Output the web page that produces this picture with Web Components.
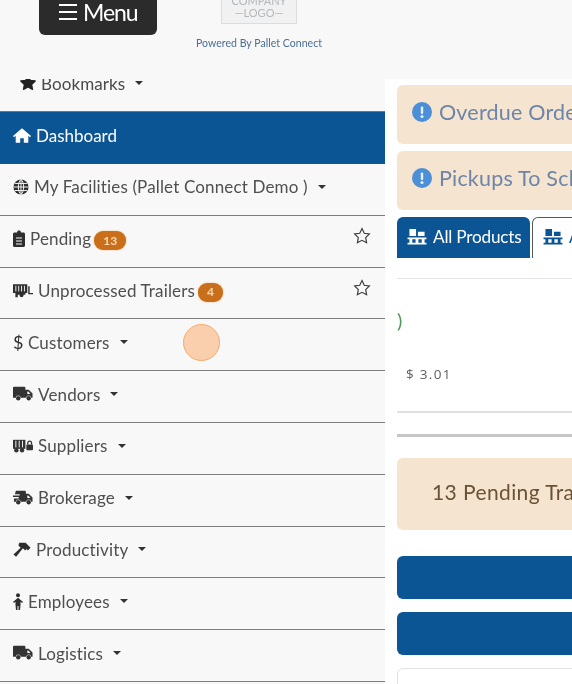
<!DOCTYPE html>
<html>
<head>
<meta charset="utf-8">
<style>
  html, body { margin: 0; height: 100%; overflow: hidden; background: #f8f8f8; }
  body { font-family: Lato, "Open Sans", sans-serif; color: #444; filter: blur(.45px); }
</style>
</head>
<body>
<app-page>
  <top-bar slot="top"></top-bar>
  <side-nav slot="side">
    <nav-item icon="house" active>Dashboard</nav-item>
    <nav-item icon="globe" caret>My Facilities (Pallet Connect Demo )</nav-item>
    <nav-item icon="clipboard" badge="13" star>Pending</nav-item>
    <nav-item icon="trailer" badge="4" star>Unprocessed Trailers</nav-item>
    <nav-item icon="dollar" caret>Customers</nav-item>
    <nav-item icon="truck" caret>Vendors</nav-item>
    <nav-item icon="supplier" caret>Suppliers</nav-item>
    <nav-item icon="broker" caret>Brokerage</nav-item>
    <nav-item icon="hammer" caret>Productivity</nav-item>
    <nav-item icon="person" caret>Employees</nav-item>
    <nav-item icon="truck" caret>Logistics</nav-item>
  </side-nav>
  <main-panel slot="main"></main-panel>
</app-page>
<click-dot></click-dot>

<script>
const ICONS = {
  star: `<svg viewBox="0 0 20 20" width="18" height="18"><path fill="#222" stroke="#222" stroke-width="1.500" stroke-linejoin="round" d="M10 2l2.500 5 5.500.8-4 3.900 1 5.300-5-2.600L5 17l1-5.300-4-3.900 5.500-.8z"/></svg>`,
  house: `<svg viewBox="0 0 20 18" width="18" height="17"><path fill="#fff" d="M10 1L0 9.600l1.200 1.300L3 9.400V17h5v-5h4v5h5V9.400l1.800 1.500L20 9.600z"/></svg>`,
  globe: `<svg viewBox="0 0 18 18" width="16" height="16"><circle cx="9" cy="9" r="8.500" fill="#2e2e2e"/><path fill="none" stroke="#f8f8f8" stroke-width="1.100" d="M9 .5v17M.5 9h17M2 5h14M2 13h14M9 .5C5 4 5 14 9 17.500M9 .5c4 3.500 4 13.500 0 17"/></svg>`,
  clipboard: `<svg viewBox="0 0 12 17" width="12" height="17"><path fill="#2e2e2e" d="M1.500 2.500H4C4 1 5 .4 6 .4S8 1 8 2.500h2.500c.8 0 1.500.7 1.500 1.500v11.500c0 .8-.7 1.500-1.500 1.500h-9C.7 17 0 16.300 0 15.500V4c0-.8.7-1.500 1.500-1.500z"/><path stroke="#f8f8f8" stroke-width="1" d="M3 8h6M3 11h6M3 14h6"/></svg>`,
  trailer: `<svg viewBox="0 0 21 15" width="20" height="15"><path fill="#2e2e2e" d="M0 1h15v9h-2v2H5v2.500H2.500V10H0z"/><path stroke="#f8f8f8" stroke-width="1" d="M3 2.500v6M6 2.500v6M9 2.500v6M12 2.500v6"/><path fill="#2e2e2e" d="M16 3h1.500v7H21v1.500h-5z"/><circle cx="9" cy="12.500" r="2" fill="#2e2e2e"/></svg>`,
  truck: `<svg viewBox="0 0 21 15" width="20" height="16"><path fill="#333" d="M1 0h11c.6 0 1 .4 1 1v2h3.500L20.500 7v4.500H19a2.500 2.500 0 0 0-5 0H8a2.500 2.500 0 0 0-5 0H0V1c0-.6.4-1 1-1z"/><circle cx="5.500" cy="12" r="2.300" fill="#333"/><circle cx="16.500" cy="12" r="2.300" fill="#333"/><path fill="#f8f8f8" d="M15 5h1l2 2v.6h-3z"/></svg>`,
  supplier: `<svg viewBox="0 0 21 15" width="20" height="16"><path fill="#333" d="M0 1h13v9.500H0z"/><path stroke="#f8f8f8" stroke-width="1" d="M3 2v7M6.500 2v7M10 2v7"/><circle cx="3.500" cy="12" r="2.300" fill="#333"/><circle cx="9.500" cy="12" r="2.300" fill="#333"/><rect x="14" y="6" width="7" height="6" rx="1" fill="#333"/><path fill="none" stroke="#333" stroke-width="1.300" d="M15.500 6V4.500a2 2 0 0 1 4 0V6"/></svg>`,
  broker: `<svg viewBox="0 0 21 15" width="20" height="16"><path fill="#333" d="M3 0h9.500c.6 0 1 .4 1 1v2h3L20.500 7v4.500H19a2.500 2.500 0 0 0-5 0H8a2.500 2.500 0 0 0-5 0H1V8h5V6.500H0V5h7V3.500H2z"/><circle cx="5.500" cy="12" r="2.300" fill="#333"/><circle cx="16.500" cy="12" r="2.300" fill="#333"/><path fill="#f8f8f8" d="M15 5h1l2 2v.6h-3z"/></svg>`,
  hammer: `<svg viewBox="0 0 20 18" width="18" height="17"><path fill="#2e2e2e" d="M7 1.500h7l5.500 5.500-3 3-1.500-1.500-1.500 1.500-2.500-2.500L3.500 17 .5 14.500l8-7.500-2.500-2.500z"/></svg>`,
  person: `<svg viewBox="0 0 10 17" width="10" height="17"><circle cx="5" cy="2.200" r="2" fill="#2e2e2e"/><path fill="#2e2e2e" d="M5 4.800l5 4.200-1 1-1.500-1.200v3.200L7 17H5.500v-4h-1v4H3l-.5-5V8.800L1 10 0 9z"/></svg>`,
  pallet: c => `<svg viewBox="0 0 20 18" width="20" height="17"><path fill="${c}" d="M2 1h7v7.500H2zM11 4h7v4.500h-7zM0 10h20v2H0zM0 15.500h20v2H0zM2 12h3v3.500H2zM8.500 12h3v3.500h-3zM15 12h3v3.500h-3z"/></svg>`,
  info: `<svg viewBox="0 0 20 20" width="20" height="20"><circle cx="10" cy="10" r="10" fill="#4a8fd8"/><rect x="8.800" y="4.500" width="2.400" height="7.500" rx="1" fill="#eef0ee"/><circle cx="10" cy="14.500" r="1.500" fill="#eef0ee"/></svg>`,
  hollowStar: `<svg viewBox="0 0 20 20" width="18" height="18"><path fill="none" stroke="#3a3a3a" stroke-width="1.300" d="M10 1.800l2.500 5.200 5.700.8-4.100 4 1 5.700L10 14.800l-5.100 2.700 1-5.700-4.100-4 5.700-.8z"/></svg>`
};

class AppPage extends HTMLElement {
  constructor() {
    super();
    this.attachShadow({ mode: "open" });
    this.shadowRoot.innerHTML = `
    <style>
      :host { display: grid; grid-template-columns: 385px 187px; grid-template-rows: 79px 605px; width: 572px; height: 684px; overflow: hidden; background: #f8f8f8; }
      .top { grid-column: 1 / 3; }
      .side { overflow: hidden; }
      .main { background: #fff; overflow: hidden; min-width: 0; }
    </style>
    <div class="top"><slot name="top"></slot></div>
    <div class="side"><slot name="side"></slot></div>
    <div class="main"><slot name="main"></slot></div>
    `;
  }
}

class TopBar extends HTMLElement {
  constructor() {
    super();
    this.attachShadow({ mode: "open" });
    this.shadowRoot.innerHTML = `
    <style>
      :host { display: flex; height: 79px; background: #f8f8f8; overflow: hidden; padding-left: 39px; box-sizing: border-box; }
      .menu { display: flex; align-items: center; gap: 6px; width: 118px; height: 35px; background: #2b2b2b; border-radius: 0 0 6px 6px; color: #fff; font-size: 23px; padding: 0 0 11px 20px; box-sizing: border-box; letter-spacing: -1.100px; }
      .bars { width: 18px; height: 16px; border-top: 2px solid #fff; border-bottom: 2px solid #fff; position: relative; box-sizing: border-box; }
      .bars::after { content: ""; position: absolute; left: 0; right: 0; top: 5px; height: 2px; background: #fff; }
      .brand { margin-left: 38px; width: 128px; display: flex; flex-direction: column; align-items: center; }
      .logo { width: 76px; height: 24px; background: #f1f1f1; border: 1px solid #dcdcdc; border-top: 0; box-sizing: border-box; color: #b4b8bc; font-size: 11px; line-height: 12px; text-align: center; margin-bottom: 13px; overflow: hidden; display: flex; flex-direction: column; justify-content: flex-end; padding-bottom: 4px; flex: none; }
      .power { color: #4a6d96; font-size: 10.500px; white-space: nowrap; letter-spacing: .04px; }
    </style>
    <div class="menu"><span class="bars"></span><span>Menu</span></div>
    <div class="brand">
      <div class="logo"><span>COMPANY</span><span>&mdash;LOGO&mdash;</span></div>
      <div class="power">Powered By Pallet Connect</div>
    </div>
    `;
  }
}

class SideNav extends HTMLElement {
  constructor() {
    super();
    this.attachShadow({ mode: "open" });
    this.shadowRoot.innerHTML = `
    <style>
      :host { display: block; background: #f8f8f8; }
      .marks { display: flex; align-items: center; height: 32px; padding: 0 0 24px 19px; box-sizing: border-box; gap: 4px; font-size: 17px; letter-spacing: .1px; color: #4a4a4a; overflow: hidden; }
      .marks i { margin-left: 6px; border: 4.500px solid transparent; border-top-color: #333; border-bottom: 0; }
      svg { flex: none; }
    </style>
    <div class="marks">${ICONS.star}<span>Bookmarks</span><i></i></div>
    <slot></slot>
    `;
  }
}

class NavItem extends HTMLElement {
  constructor() {
    super();
    this.attachShadow({ mode: "open" });
    const name = this.getAttribute("icon");
    const badge = this.getAttribute("badge");
    const icon = name === "dollar" ? `<span class="dollar">$</span>` : ICONS[name];
    this.shadowRoot.innerHTML = `
    <style>
      :host { display: flex; align-items: center; gap: 5px; height: 51.800px; box-sizing: border-box; padding: 0 14px 5px 13px; border-bottom: 1.500px solid #7d7d7d; font-size: 17px; letter-spacing: .15px; color: #4f4f4f; white-space: nowrap; }
      :host([active]) { height: 53px; background: #0b5595; color: #fff; border: 0; border-top: 1px solid #4f7ea8; padding-bottom: 6px; letter-spacing: 0; }
      svg { flex: none; }
      .dollar { font-size: 18px; color: #2e2e2e; width: 10px; }
      .caret { margin-left: 5px; border: 4.500px solid transparent; border-top-color: #333; border-bottom: 0; }
      .badge { margin-left: -2px; margin-top: 4px; background: #c96f1c; color: #fbdcb8; font-size: 12px; font-weight: 700; line-height: 1; padding: 3.500px 9px; border-radius: 9px; box-shadow: 0 0 2px #f3b877; letter-spacing: 0; }
      .star { margin-left: auto; margin-top: -1px; }
    </style>
    ${icon}<span><slot></slot></span>
    ${badge ? `<span class="badge">${badge}</span>` : ""}
    ${this.hasAttribute("caret") ? `<span class="caret"></span>` : ""}
    ${this.hasAttribute("star") ? `<span class="star">${ICONS.hollowStar}</span>` : ""}
    `;
  }
}

class AlertBox extends HTMLElement {
  constructor() {
    super();
    this.attachShadow({ mode: "open" });
    this.shadowRoot.innerHTML = `
    <style>
      :host { display: flex; align-items: center; gap: 7px; box-sizing: border-box; width: 260px; height: 59px; padding: 0 0 5px 15px; background: #f5e4cf; border-radius: 6px; color: #6d85a8; font-size: 21.500px; white-space: nowrap; letter-spacing: .2px; }
      svg { flex: none; }
    </style>
    ${ICONS.info}<span><slot></slot></span>
    `;
  }
}

class TabBar extends HTMLElement {
  constructor() {
    super();
    this.attachShadow({ mode: "open" });
    this.shadowRoot.innerHTML = `
    <style>
      :host { display: flex; gap: 2px; height: 41px; width: 260px; font-size: 17.200px; white-space: nowrap; letter-spacing: -.2px; }
      div { display: flex; align-items: center; gap: 6px; box-sizing: border-box; border-radius: 6px 6px 0 0; padding: 0 0 3px 10px; flex: none; }
      svg { flex: none; }
      .on { width: 133px; background: #0b5595; color: #fff; }
      .off { width: 120px; background: #fff; color: #0b5595; border: 1px solid #4d5a66; border-bottom: 0; }
    </style>
    <div class="on">${ICONS.pallet("#fff")}All Products</div>
    <div class="off">${ICONS.pallet("#0b5595")}All Products</div>
    `;
  }
}

class MainPanel extends HTMLElement {
  constructor() {
    super();
    this.attachShadow({ mode: "open" });
    this.shadowRoot.innerHTML = `
    <style>
      :host { display: block; padding: 6px 0 0 12px; height: 605px; overflow: hidden; box-sizing: border-box; background: #fff; }
      .stack { display: flex; flex-direction: column; gap: 7px; }
      .tabs { margin-top: 7px; }
      .body { height: 135px; border-top: 1px solid #e4e4e4; margin-top: 20px; border-bottom: 2px solid #e0e0e0; width: 260px; box-sizing: border-box; display: flex; flex-direction: column; }
      .paren { color: #4c9a58; font-size: 20px; line-height: 24px; margin-top: 29px; }
      .price { color: #5e5e5e; letter-spacing: 1.300px; margin: 33px 0 0 9px; line-height: 18px; font-family: "Open Sans", sans-serif; font-size: 13.500px; }
      .rule { height: 3px; background: #c6c6c6; width: 260px; margin-top: 21px; }
      .note { margin-top: 21px; height: 72px; width: 260px; box-sizing: border-box; padding: 22px 0 0 35px; background: #f5e4cf; border-radius: 6px; color: #6b5236; font-size: 21px; line-height: 24px; white-space: nowrap; letter-spacing: .4px; }
      .bar { height: 42.500px; width: 260px; margin-top: 13.500px; background: #0b5595; border-radius: 6px; }
      .bar.first { margin-top: 26px; }
      .card { height: 40px; width: 260px; margin-top: 13px; background: #fff; border: 1px solid #e2e2e2; border-radius: 6px; box-sizing: border-box; }
    </style>
    <div class="stack">
      <alert-box>Overdue Orders</alert-box>
      <alert-box>Pickups To Schedule</alert-box>
    </div>
    <tab-bar class="tabs"></tab-bar>
    <div class="body">
      <div class="paren">)</div>
      <div class="price">$ 3.01</div>
    </div>
    <div class="rule"></div>
    <div class="note">13 Pending Trailers</div>
    <div class="bar first"></div>
    <div class="bar"></div>
    <div class="card"></div>
    `;
  }
}

class ClickDot extends HTMLElement {
  constructor() {
    super();
    this.attachShadow({ mode: "open" });
    this.shadowRoot.innerHTML = `
    <style>
      :host { position: absolute; left: 183px; top: 324px; width: 37px; height: 37px; box-sizing: border-box; border-radius: 50%; background: #f9cfae; border: 1px solid #f7ab6e; }
    </style>
    `;
  }
}

customElements.define("app-page", AppPage);
customElements.define("top-bar", TopBar);
customElements.define("side-nav", SideNav);
customElements.define("nav-item", NavItem);
customElements.define("alert-box", AlertBox);
customElements.define("tab-bar", TabBar);
customElements.define("main-panel", MainPanel);
customElements.define("click-dot", ClickDot);
</script>
</body>
</html>
